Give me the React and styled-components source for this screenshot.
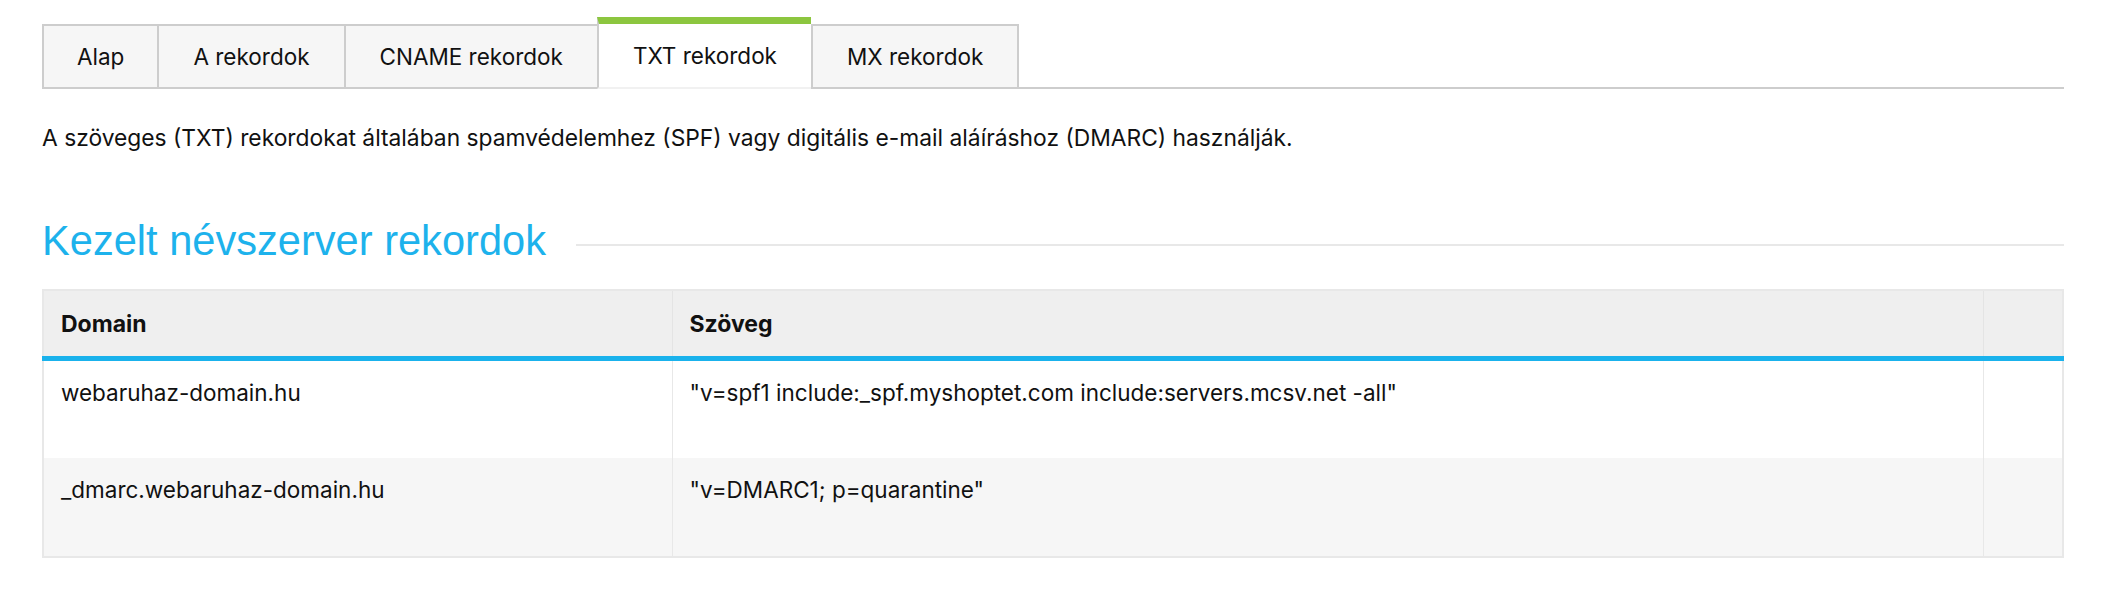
import React from "react";
import styled, { createGlobalStyle } from "styled-components";

const GlobalStyle = createGlobalStyle`
  html, body {
    margin: 0;
    padding: 0;
    background: #fff;
  }
  body {
    font-family: Inter, "Noto Sans", sans-serif;
    color: #111;
  }
`;

const tabs = [
  { label: "Alap" },
  { label: "A rekordok" },
  { label: "CNAME rekordok" },
  { label: "TXT rekordok", active: true },
  { label: "MX rekordok" },
];

const records = [
  {
    domain: "webaruhaz-domain.hu",
    text: '"v=spf1 include:_spf.myshoptet.com include:servers.mcsv.net -all"',
  },
  {
    domain: "_dmarc.webaruhaz-domain.hu",
    text: '"v=DMARC1; p=quarantine"',
  },
];

const App = () => {
  return (
    <Page>
      <GlobalStyle />
      <TabBar>
        {tabs.map((tab) => (
          <Tab key={tab.label} $active={tab.active}>
            {tab.label}
          </Tab>
        ))}
      </TabBar>
      <Intro>
        A szöveges (TXT) rekordokat általában spamvédelemhez (SPF) vagy
        digitális e-mail aláíráshoz (DMARC) használják.
      </Intro>
      <SectionHead>
        <SectionTitle>Kezelt névszerver rekordok</SectionTitle>
        <SectionLine />
      </SectionHead>
      <Table>
        <colgroup>
          <col style={{ width: 629 }} />
          <col />
          <col style={{ width: 80 }} />
        </colgroup>
        <thead>
          <tr>
            <Th>Domain</Th>
            <Th>Szöveg</Th>
            <Th />
          </tr>
        </thead>
        <tbody>
          {records.map((row, i) => (
            <Row key={row.domain} $striped={i % 2 === 1}>
              <Td>{row.domain}</Td>
              <Td>{row.text}</Td>
              <Td />
            </Row>
          ))}
        </tbody>
      </Table>
    </Page>
  );
};

export default App;

const Page = styled.div`
  width: 2022px;
  padding: 17px 0 0 42px;
`;

const TabBar = styled.div`
  display: flex;
  align-items: flex-end;
  border-bottom: 2px solid #cdcdcd;
`;

const Tab = styled.div`
  display: flex;
  align-items: center;
  height: ${({ $active }) => ($active ? "63px" : "61px")};
  padding: 0 34px;
  margin-bottom: ${({ $active }) => ($active ? "-2px" : "0")};
  font-size: 22.5px;
  color: #111;
  background: ${({ $active }) => ($active ? "#fff" : "#f6f6f6")};
  border-top: ${({ $active }) =>
    $active ? "7px solid #8cc63f" : "2px solid #cdcdcd"};
  border-left: 2px solid #cdcdcd;
  border-bottom: ${({ $active }) => ($active ? "2px solid #f1f1f1" : "none")};
  &:first-child {
    padding: 0 33px;
  }
  &:last-child {
    border-right: 2px solid #cdcdcd;
  }
`;

const Intro = styled.p`
  margin: 34px 0 0 0;
  font-size: 22.8px;
  line-height: 30px;
`;

const SectionHead = styled.div`
  display: flex;
  align-items: center;
  margin: 64px 0 0 0;
`;

const SectionTitle = styled.h2`
  margin: 0;
  font-family: "Liberation Sans", Arial, sans-serif;
  font-size: 41.6px;
  font-weight: 400;
  line-height: 48px;
  color: #1db2ec;
  white-space: nowrap;
`;

const SectionLine = styled.div`
  flex: 1;
  height: 2px;
  margin: 8px 0 0 30px;
  background: #e8e8e8;
`;

const Table = styled.table`
  width: 100%;
  margin: 24px 0 0 0;
  border-collapse: collapse;
  table-layout: fixed;
  border: 2px solid #e8e8e8;
  font-size: 22.5px;
`;

const Th = styled.th`
  height: 65px;
  padding: 0 17px;
  text-align: left;
  font-weight: 700;
  font-size: 23px;
  background: #efefef;
  border-left: 1px solid #e4e4e4;
  border-bottom: 5px solid #1ab2ec;
`;

const Row = styled.tr`
  background: ${({ $striped }) => ($striped ? "#f6f6f6" : "#fff")};
  & + & td {
    height: 96px;
    border-top: 2px solid #ebebeb;
  }
`;

const Td = styled.td`
  height: 99px;
  box-sizing: border-box;
  padding: 17px 17px;
  vertical-align: top;
  line-height: 30px;
  border-left: 1px solid #e8e8e8;
`;
